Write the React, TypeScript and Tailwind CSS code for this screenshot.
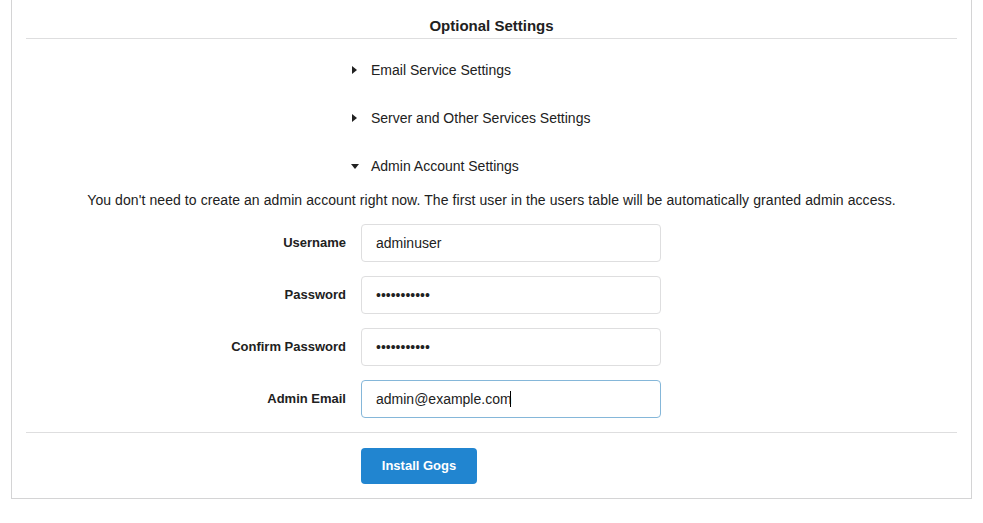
import React from 'react';

const CaretRight: React.FC = () => (
  <svg width="5" height="8" viewBox="0 0 5 8" className="ml-px">
    <path d="M0 0L5 4L0 8Z" fill="#212121" />
  </svg>
);

const CaretDown: React.FC = () => (
  <svg width="8" height="5" viewBox="0 0 8 5">
    <path d="M0 0L8 0L4 5Z" fill="#212121" />
  </svg>
);

const sections = [
  { title: 'Email Service Settings', open: false },
  { title: 'Server and Other Services Settings', open: false },
  { title: 'Admin Account Settings', open: true },
];

const fields = [
  { label: 'Username', type: 'text', value: 'adminuser' },
  { label: 'Password', type: 'password', value: 'adminpasswd' },
  { label: 'Confirm Password', type: 'password', value: 'adminpasswd' },
  { label: 'Admin Email', type: 'email', value: 'admin@example.com', focused: true },
];

const App: React.FC = () => {
  return (
    <div className="min-h-[523px] bg-white px-[11px] font-['Liberation_Sans',Arial,sans-serif] text-[#212121]">
      <div className="w-[961px] border-x border-b border-[#d4d4d5] px-[14px] pb-[14px]">
        <h4 className="border-b border-[#dededf] pt-[16px] pb-[3px] text-center text-[15px] font-bold leading-[19px]">
          Optional Settings
        </h4>

        <div className="flex flex-col gap-[28px] pt-[21px] pl-[325px]">
          {sections.map((s) => (
            <div key={s.title} className="flex h-[20px] items-center text-[14px]">
              <span className="mr-[12px] flex h-[8px] w-[8px] items-center">
                {s.open ? <CaretDown /> : <CaretRight />}
              </span>
              {s.title}
            </div>
          ))}
        </div>

        <p className="mt-[14px] text-center text-[14px] leading-[20px] tracking-[0.08px]">
          You don't need to create an admin account right now. The first user in the users table will be automatically granted admin access.
        </p>

        <div className="mt-[14px] flex flex-col gap-[14px]">
          {fields.map((f) => (
            <div key={f.label} className="flex items-center">
              <label className="mr-[15px] w-[320px] text-right text-[13px] font-bold">{f.label}</label>
              <div className="relative">
                <input
                  type={f.type}
                  defaultValue={f.value}
                  readOnly
                  className={
                    'h-[38px] w-[300px] rounded-[4px] border bg-white px-[14px] text-[14px] text-[#212121] outline-none ' +
                    (f.focused ? 'border-[#85b7d9]' : 'border-[#dededf]')
                  }
                />
                {f.focused && <span className="absolute top-[11px] left-[149px] h-[16px] w-px bg-black" />}
              </div>
            </div>
          ))}
        </div>

        <div className="mt-[14px] border-t border-[#dededf]" />

        <div className="mt-[15px] pl-[335px]">
          <button className="h-[36px] w-[116px] rounded-[4px] bg-[#2185d0] text-[13px] font-bold text-white">
            Install Gogs
          </button>
        </div>
      </div>
    </div>
  );
};

export default App;
